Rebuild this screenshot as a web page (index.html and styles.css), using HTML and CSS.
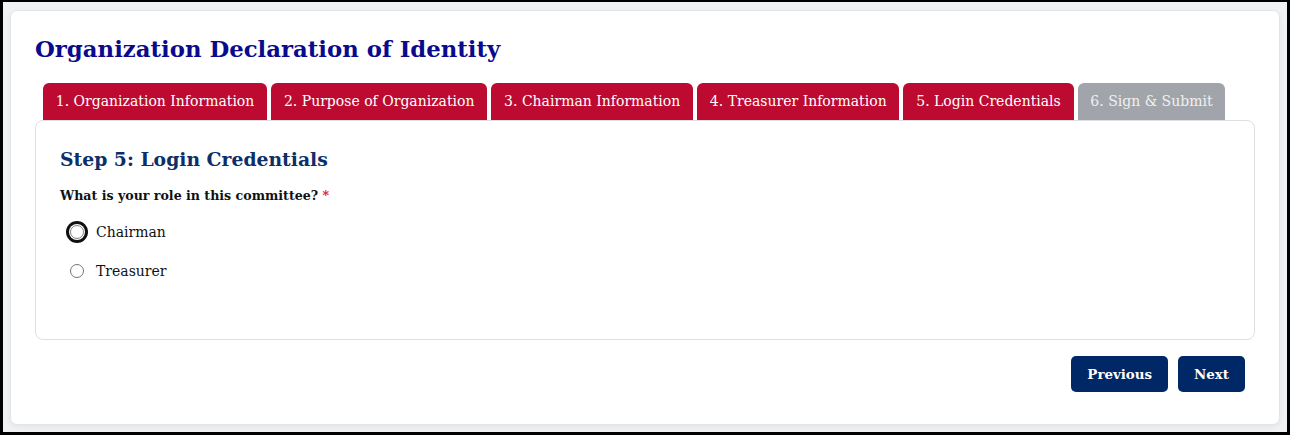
FILE: index.html
```html
<!DOCTYPE html>
<html lang="en">
<head>
<meta charset="utf-8">
<title>Organization Declaration of Identity</title>
<link rel="stylesheet" href="styles.css">
</head>
<body>
<div class="frame">
  <div class="card">
    <h1 class="title">Organization Declaration of Identity</h1>
    <div class="tabs">
      <div class="tab">1. Organization Information</div>
      <div class="tab">2. Purpose of Organization</div>
      <div class="tab">3. Chairman Information</div>
      <div class="tab">4. Treasurer Information</div>
      <div class="tab">5. Login Credentials</div>
      <div class="tab tab-disabled">6. Sign &amp; Submit</div>
    </div>
    <div class="panel">
      <h2 class="step">Step 5: Login Credentials</h2>
      <div class="question">What is your role in this committee? <span class="req">*</span></div>
      <label class="option"><span class="radio radio-focus"></span><span class="opt-text">Chairman</span></label>
      <label class="option"><span class="radio"></span><span class="opt-text">Treasurer</span></label>
    </div>
    <div class="actions">
      <button class="btn" type="button">Previous</button>
      <button class="btn" type="button">Next</button>
    </div>
  </div>
</div>
</body>
</html>
```
FILE: styles.css
```css
html, body {
  margin: 0;
  padding: 0;
  background: #000;
  height: 435px;
  overflow: hidden;
}
body {
  font-family: "DejaVu Serif", "Liberation Serif", serif;
}
.frame {
  margin: 2px 3px 0 3px;
  height: 430px;
  box-sizing: border-box;
  background: #f1f2f4;
  padding: 8px 7px 7px 7px;
}
.card {
  background: #fff;
  border: 1px solid #e3e4e7;
  border-radius: 7px;
  height: 415px;
  box-sizing: border-box;
  padding: 23px 24px 0 24px;
  box-shadow: 0 2px 6px rgba(0,0,0,0.06);
}
.title {
  margin: 0;
  font-size: 22.8px;
  font-weight: bold;
  color: #0a0a8c;
  line-height: 30px;
}
.tabs {
  display: flex;
  gap: 4px;
  margin: 19px 0 0 8px;
  height: 37px;
}
.tab {
  background: #bd0a31;
  color: #fff;
  font-size: 14px;
  line-height: 36px;
  padding: 0 12.8px;
  border-radius: 6px 6px 0 0;
  white-space: nowrap;
}
.tab-disabled {
  background: #a1a5ab;
  color: #f0f0f0;
}
.panel {
  border: 1px solid #dedfe2;
  border-radius: 8px;
  height: 220px;
  box-sizing: border-box;
  padding: 26px 24px 0 24px;
}
.step {
  margin: 0;
  font-size: 18.8px;
  font-weight: bold;
  color: #0c2f6a;
  line-height: 24px;
}
.question {
  margin-top: 16px;
  font-size: 12.6px;
  font-weight: bold;
  color: #111;
  line-height: 18px;
}
.req {
  color: #e0141e;
}
.option {
  display: flex;
  align-items: center;
  gap: 12px;
  margin-left: 10px;
  height: 20px;
  margin-top: 17px;
  font-size: 14px;
  color: #111;
}
.option + .option {
  margin-top: 19px;
}
.radio {
  width: 14px;
  height: 14px;
  border: 1px solid #767676;
  border-radius: 50%;
  box-sizing: border-box;
  background: #fff;
  flex: none;
}
.radio-focus {
  border-color: #858585;
  box-shadow: 0 0 0 1px #fff, 0 0 0 4px #101010;
}
.actions {
  display: flex;
  justify-content: flex-end;
  gap: 10px;
  padding: 16px 10px 0 0;
}
.btn {
  font-family: "DejaVu Serif", "Liberation Serif", serif;
  font-weight: bold;
  font-size: 13.4px;
  color: #fff;
  background: #002866;
  border: none;
  border-radius: 5px;
  height: 36px;
  padding: 0 16px;
  cursor: pointer;
}
```
